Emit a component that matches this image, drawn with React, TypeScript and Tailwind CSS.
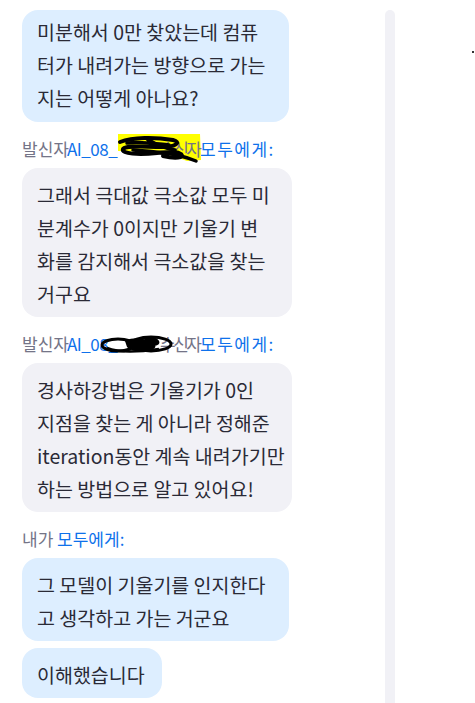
import React from 'react';

const Label1Yellow = () => (
  <svg className="absolute left-[95px] top-[-6px] z-0" width="92" height="32" viewBox="0 0 92 32">
    <path d="M1 1 L83 1 L84 27 L70 28 L56 23 L38 19 L1 18 Z" fill="#ffff00" />
  </svg>
);

const Label1Scribble = () => (
  <svg className="absolute left-[95px] top-[-6px] z-20" width="92" height="32" viewBox="0 0 92 32">
    <path
      d="M3 9 C16 4 38 4 56 7 C64 9 60 14 44 14 C28 14 10 12 6 16 C4 21 22 22 40 20 C54 19 60 18 64 21 C68 25 58 26 46 23"
      fill="none"
      stroke="#000"
      strokeWidth="4"
      strokeLinecap="round"
    />
    <path
      d="M10 10 C24 8 40 11 52 12 M16 17 C30 18 46 19 60 22 C68 24 74 26 79 28 M30 6 C40 12 50 16 58 17"
      fill="none"
      stroke="#000"
      strokeWidth="3.5"
      strokeLinecap="round"
    />
  </svg>
);

const Label2Scribble = () => (
  <svg className="absolute left-[77px] top-[1px] z-20" width="78" height="22" viewBox="0 0 78 22">
    <ellipse cx="19" cy="10" rx="16" ry="6" fill="none" stroke="#000" strokeWidth="3" />
    <ellipse cx="52" cy="9" rx="20" ry="7" fill="none" stroke="#000" strokeWidth="3" />
    <path d="M26 6 C34 2 44 3 50 6 C56 9 60 12 52 15 C42 18 32 16 28 12 Z" fill="#000" />
    <path d="M44 3 C50 1 58 2 60 6 C62 10 56 12 50 10 Z" fill="#000" />
    <path d="M8 13 C20 18 40 17 60 14" fill="none" stroke="#000" strokeWidth="2.5" />
  </svg>
);

const SenderLabel = ({ variant }: { variant: 1 | 2 }) => (
  <div className="relative h-5 leading-5 text-[17px] mt-[17px] mb-[9px] text-[#747487] whitespace-nowrap">
    {variant === 1 && <Label1Yellow />}
    <span className="relative z-10 inline-block w-[45px]">발신자</span>
    <span className="relative z-10 inline-block w-[47px] text-[#0e71eb] tracking-[-0.5px]">AI_08_</span>
    <span className="inline-block w-[46px]" />
    <span className="relative z-10 inline-block w-[40px] tracking-[-2.5px]">수신자</span>
    <span className="relative z-10 text-[#0e71eb] tracking-[1.5px]">모두에게:</span>
    {variant === 1 ? <Label1Scribble /> : <Label2Scribble />}
  </div>
);

export default function App() {
  return (
    <div className="h-[703px] w-[475px] overflow-hidden bg-white flex font-['Noto_Sans_CJK_KR','Noto_Sans',sans-serif]">
      <div className="w-[385px] pl-[22px] pt-[10px]">
        <div className="w-[267px] bg-[#ddeeff] rounded-[16px] pl-[15px] pt-[5px] pb-[8px] text-[19.5px] leading-[33px] text-[#2a2a36] whitespace-nowrap">
          미분해서 0만 찾았는데 컴퓨<br />
          터가 내려가는 방향으로 가는<br />
          지는 어떻게 아나요?
        </div>

        <SenderLabel variant={1} />

        <div className="w-[270px] bg-[#f1f1f6] rounded-[16px] pl-[15px] pt-[10px] pb-[7px] text-[19.5px] leading-[33px] text-[#2a2a36] whitespace-nowrap">
          그래서 극대값 극소값 모두 미<br />
          분계수가 0이지만 기울기 변<br />
          화를 감지해서 극소값을 찾는<br />
          거구요
        </div>

        <SenderLabel variant={2} />

        <div className="w-[270px] bg-[#f1f1f6] rounded-[16px] pl-[15px] pt-[10px] pb-[7px] text-[19.5px] leading-[33px] text-[#2a2a36] whitespace-nowrap">
          경사하강법은 기울기가 0인<br />
          지점을 찾는 게 아니라 정해준<br />
          iteration동안 계속 내려가기만<br />
          하는 방법으로 알고 있어요!
        </div>

        <div className="h-5 leading-5 text-[17px] mt-[17px] mb-[9px] text-[#747487] whitespace-nowrap">
          내가 <span className="text-[#0e71eb]">모두에게:</span>
        </div>

        <div className="w-[267px] bg-[#ddeeff] rounded-[16px] pl-[15px] pt-[10px] pb-[7px] text-[19.5px] leading-[33px] text-[#2a2a36] whitespace-nowrap">
          그 모델이 기울기를 인지한다<br />
          고 생각하고 가는 거군요
        </div>

        <div className="mt-[7px] w-[140px] bg-[#ddeeff] rounded-[16px] pl-[15px] pt-[10px] pb-[7px] text-[19.5px] leading-[33px] text-[#2a2a36] whitespace-nowrap">
          이해했습니다
        </div>
      </div>

      <div className="w-[10px] mt-[10px] rounded-t-full bg-[#f1f1f6]" />

      <div className="flex-1 flex justify-end items-start pt-[51px] pr-[1px]">
        <div className="w-[2px] h-[2px] bg-[#333]" />
      </div>
    </div>
  );
}
